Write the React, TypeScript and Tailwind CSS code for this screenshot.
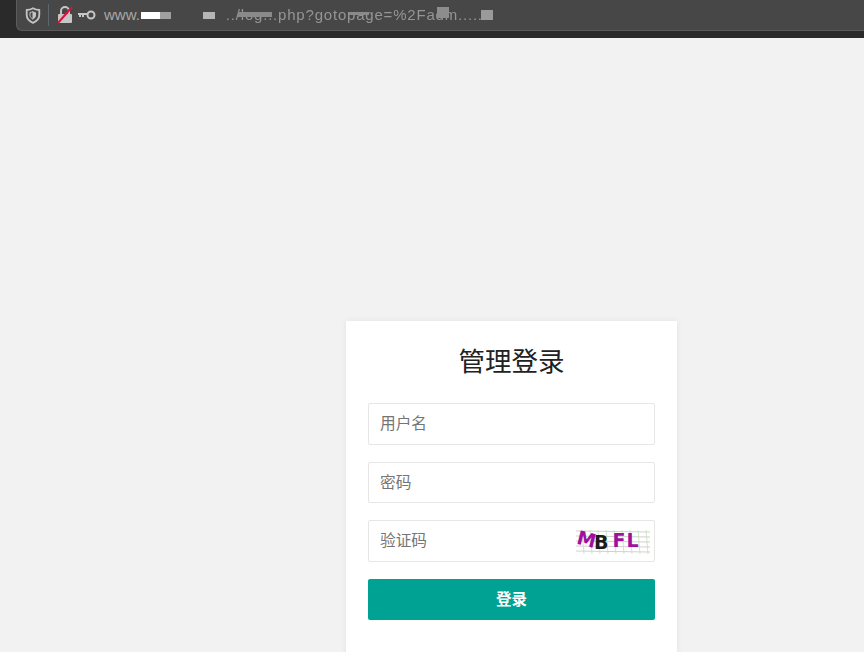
const cjk = "font-['Liberation_Sans','Noto_Sans_CJK_SC',sans-serif]";

function Captcha() {
  return (
    <div className="relative h-[28px] w-[74px] bg-white">
      <svg className="absolute inset-0" width="74" height="28" viewBox="0 0 74 28">
        {[4, 9, 14, 19, 24].map((y) => (
          <path key={y} d={`M0 ${y} L74 ${y + 1}`} stroke="#c4c4c4" strokeWidth="0.8" />
        ))}
        {[6, 14, 22, 30, 38, 46, 54, 62, 70].map((x) => (
          <path key={x} d={`M${x} 3 L${x + 2} 27`} stroke="#bfe3b8" strokeWidth="0.8" />
        ))}
      </svg>
      <div className="relative flex h-full items-center pl-[1px] font-['DejaVu_Sans',sans-serif] font-bold leading-none text-[#a0109f]">
        <span className="-translate-y-[1px] rotate-[14deg] text-[19px]">M</span>
        <span className="ml-[-2px] translate-y-[2px] text-[19px] text-[#1c1c1c]">B</span>
        <span className="ml-[4px] text-[19px]">F</span>
        <span className="ml-[1px] text-[19px]">L</span>
      </div>
    </div>
  );
}

function Field({ placeholder, children }: { placeholder: string; children?: React.ReactNode }) {
  return (
    <div className="flex h-[41.5px] items-center justify-between rounded-[2px] border border-[#e6e6e6] bg-white pl-[11px] pr-[4px]">
      <span className="pt-[1px] text-[15.7px] text-[#757575]">{placeholder}</span>
      {children}
    </div>
  );
}

export default function App() {
  return (
    <div className={`h-[652px] w-[864px] overflow-hidden bg-[#f2f2f2] ${cjk}`}>
      <div className="h-[38px] bg-[#2a2a2a] pl-[16px]">
        <div className="relative flex h-[31px] items-center rounded-bl-[6px] border-b border-l border-[#5c5c5c] bg-[#474747] pl-[8px]">
          <svg width="16" height="17" viewBox="0 0 16 17">
            <path d="M8 1.2c2 1.2 4 1.7 6.3 1.8v5c0 3.6-2.6 6.2-6.3 7.8C4.3 14.2 1.7 11.600 1.700 8V3C4 2.900 6 2.400 8 1.200z" fill="none" stroke="#c4c4c4" strokeWidth="1.800" />
            <path d="M8 4.600c1 .5 2 .8 3 .9v2.700c0 1.700-1.200 3.100-3 4z" fill="#c4c4c4" />
            <path d="M8 4.600c-1 .5-2 .8-3 .9v2.700c0 1.700 1.200 3.100 3 4z" fill="none" stroke="#c4c4c4" strokeWidth="1" />
          </svg>
          <div className="ml-[7px] mr-[8px] h-[22px] w-px bg-[#5d6670]" />
          <div className="relative h-[18px] w-[17px]">
            <svg width="17" height="18" viewBox="0 0 17 18">
              <rect x="1" y="8" width="14" height="9" rx="1" fill="#c6c6c6" />
              <path d="M4 8V5a4 4 0 0 1 8 0v3" fill="none" stroke="#c6c6c6" strokeWidth="2" />
              <path d="M1 17L15 1" stroke="#e0123c" strokeWidth="2" />
            </svg>
          </div>
          <svg className="ml-[4px]" width="18" height="12" viewBox="0 0 18 12">
            <circle cx="13" cy="6" r="3.500" fill="none" stroke="#c6c6c6" strokeWidth="2" />
            <path d="M0 5h9M2 5v3M5 5v3" fill="none" stroke="#c6c6c6" strokeWidth="2" />
          </svg>
          <span className="ml-[8px] font-['Liberation_Sans',sans-serif] text-[15px] text-[#a8a8a8]">www.</span>
          <div className="ml-[1px] h-[7px] w-[19px] bg-white" />
          <div className="h-[7px] w-[11px] bg-[#a0a0a0]" />
          <div className="ml-[32px] h-[7px] w-[12px] bg-[#b5b5b5]" />
          <span className="ml-[11px] font-['Liberation_Sans',sans-serif] text-[15px] tracking-[0.8px] text-[#959595] blur-[0.6px]">
            ../log...php?gotopage=%2Fadm.....
          </span>
          <div className="absolute left-[221px] top-[12px] h-[5px] w-[34px] bg-[#8a8a8a]" />
          <div className="absolute left-[332px] top-[12px] h-[3px] w-[20px] bg-[#8a8a8a]" />
          <div className="absolute left-[420px] top-[7px] h-[11px] w-[12px] bg-[#8d8d8d]" />
          <div className="absolute left-[464px] top-[10px] h-[10px] w-[12px] bg-[#9a9a9a]" />
        </div>
      </div>

      <div className="pl-[346px] pt-[283px]">
        <div className="h-[340px] w-[331px] bg-white px-[22px] pt-[22px] shadow-[0_0_6px_rgba(0,0,0,0.07)]">
          <h1 className="text-center text-[26.5px] font-normal leading-[38px] text-[#222222]">管理登录</h1>
          <div className="mt-[22px] flex flex-col gap-[17px]">
            <Field placeholder="用户名" />
            <Field placeholder="密码" />
            <Field placeholder="验证码">
              <Captcha />
            </Field>
            <button className="h-[41.5px] rounded-[2px] bg-[#00a393] text-[15.5px] font-bold text-white">登录</button>
          </div>
        </div>
      </div>
    </div>
  );
}
